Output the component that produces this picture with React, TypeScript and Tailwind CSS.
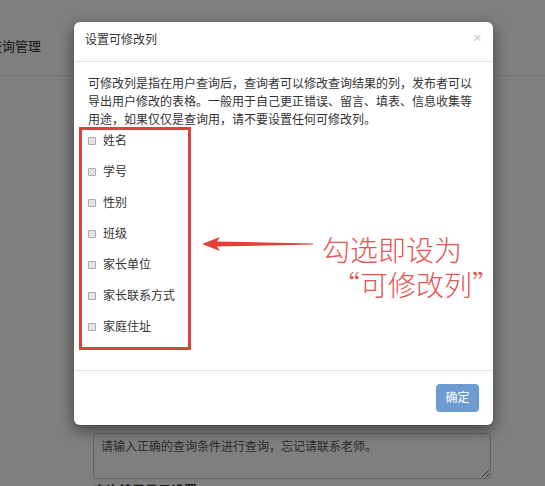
const columns = ['姓名', '学号', '性别', '班级', '家长单位', '家长联系方式', '家庭住址'];

const App = () => {
  return (
    <div className="relative h-[486px] w-[545px] overflow-hidden bg-white font-['Liberation_Sans','Noto_Sans_CJK_SC',sans-serif] text-[#333]">
      {/* page behind the dialog */}
      <div className="h-[76px] border-b border-[#e7e7e7] pt-[38px]">
        <span className="ml-[-11px] block text-[13px] leading-[18px]">查询管理</span>
      </div>
      <div className="pl-[93px] pr-[54px] pt-[357px]">
        <textarea
          readOnly
          defaultValue="请输入正确的查询条件进行查询，忘记请联系老师。"
          className="block h-[46px] w-full rounded-[4px] border border-[#ccc] px-[7px] py-[4px] text-[12px] leading-[18px] text-[#555] outline-none"
        />
        <div className="mt-[3px] text-[13px] font-bold leading-[18px]">查询结果显示设置</div>
      </div>

      <div className="absolute inset-0 bg-black/50" />

      {/* dialog */}
      <div className="absolute left-[74px] top-[22px] w-[419px] rounded-[6px] bg-white shadow-[0_5px_15px_rgba(0,0,0,0.5)]">
        <div className="flex items-start justify-between border-b border-[#e5e5e5] pb-[12px] pl-[11px] pr-[12px] pt-[9px]">
          <h4 className="text-[12px] leading-[18px] text-[#333]">设置可修改列</h4>
          <span className="text-[13px] font-bold leading-[14px] text-[#d0d0d0]">×</span>
        </div>

        <div className="pb-[20px] pl-[14px] pr-[15px] pt-[13px]">
          <p className="text-[12px] leading-[18px] text-[#333]">
            可修改列是指在用户查询后，查询者可以修改查询结果的列，发布者可以导出用户修改的表格。一般用于自己更正错误、留言、填表、信息收集等用途，如果仅仅是查询用，请不要设置任何可修改列。
          </p>
          <div className="-mt-[2px] ml-[-9px] flex w-[112px] flex-col gap-[13px] border-[3px] border-[#d9443f] pb-[11px] pl-[6px] pt-[2px]">
            {columns.map((c) => (
              <label key={c} className="flex h-[18px] items-center gap-[7px] text-[12px] leading-[18px] text-[#333]">
                <span className="h-[8px] w-[8px] rounded-[1px] border border-[#aaa] bg-[#e4e4e4]" />
                {c}
              </label>
            ))}
          </div>
        </div>

        <div className="flex justify-end border-t border-[#e5e5e5] pb-[13px] pr-[14px] pt-[13px]">
          <button className="h-[28px] w-[43px] rounded-[4px] bg-[#6d9cd2] text-[12px] text-white">确定</button>
        </div>

        {/* annotation */}
        <svg className="absolute left-[126px] top-[214px]" width="116" height="16" viewBox="0 0 116 16">
          <polygon points="2,8 20,1 17,5.5 113,7.4 113,8.6 17,10.5 20,15" fill="#e53f3a" />
        </svg>
        <div className="absolute left-[248px] top-[210px] font-['Noto_Sans_CJK_SC',sans-serif] text-[28px] font-light leading-[35px] text-[#e45555]">
          <div>勾选即设为</div>
          <div className="pl-[10px]">“可修改列”</div>
        </div>
      </div>
    </div>
  );
};

export default App;
